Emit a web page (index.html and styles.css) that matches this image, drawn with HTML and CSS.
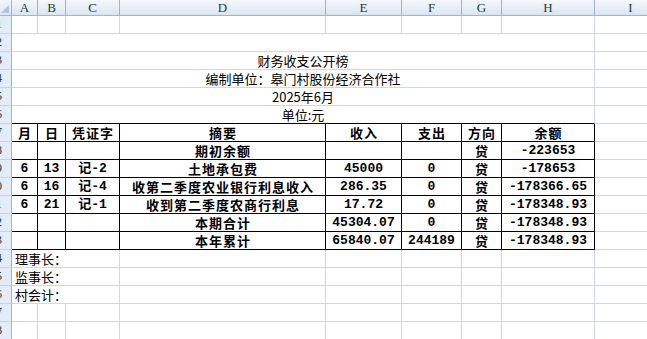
FILE: index.html
```html
<!DOCTYPE html>
<html lang="zh">
<head>
<meta charset="utf-8">
<title>财务收支公开榜</title>
<link rel="stylesheet" href="styles.css">
</head>
<body>
<div class="sheet">
  <div class="corner"><svg width="11" height="15" viewBox="0 0 11 15"><polygon points="1,13 9,5 9,13" fill="#b3c4da"/></svg></div>
  <div class="ch">A</div><div class="ch">B</div><div class="ch">C</div><div class="ch">D</div><div class="ch">E</div><div class="ch">F</div><div class="ch">G</div><div class="ch">H</div><div class="ch">I</div>

  <div class="rh"><span>1</span></div>
  <div class="cell"></div><div class="cell"></div><div class="cell"></div><div class="cell"></div><div class="cell"></div><div class="cell"></div><div class="cell"></div><div class="cell"></div><div class="cell"></div>

  <div class="rh"><span>2</span></div>
  <div class="cell m8"></div><div class="cell"></div>

  <div class="rh"><span>3</span></div>
  <div class="cell m8">财务收支公开榜</div><div class="cell"></div>

  <div class="rh"><span>4</span></div>
  <div class="cell m8">编制单位：皋门村股份经济合作社</div><div class="cell"></div>

  <div class="rh"><span>5</span></div>
  <div class="cell m8">2025年6月</div><div class="cell"></div>

  <div class="rh"><span>6</span></div>
  <div class="cell m8 topline">单位:元</div><div class="cell"></div>

  <div class="rh"><span>7</span></div>
  <div class="cell b cjk">月</div><div class="cell b cjk">日</div><div class="cell b cjk">凭证字</div><div class="cell b cjk">摘要</div><div class="cell b cjk">收入</div><div class="cell b cjk">支出</div><div class="cell b cjk">方向</div><div class="cell b cjk">余额</div><div class="cell"></div>

  <div class="rh"><span>8</span></div>
  <div class="cell b"></div><div class="cell b"></div><div class="cell b"></div><div class="cell b cjk">期初余额</div><div class="cell b"></div><div class="cell b"></div><div class="cell b cjk">贷</div><div class="cell b num">-223653</div><div class="cell"></div>

  <div class="rh"><span>9</span></div>
  <div class="cell b num">6</div><div class="cell b num">13</div><div class="cell b num">记-2</div><div class="cell b cjk">土地承包费</div><div class="cell b num">45000</div><div class="cell b num">0</div><div class="cell b cjk">贷</div><div class="cell b num">-178653</div><div class="cell"></div>

  <div class="rh"><span>10</span></div>
  <div class="cell b num">6</div><div class="cell b num">16</div><div class="cell b num">记-4</div><div class="cell b cjk">收第二季度农业银行利息收入</div><div class="cell b num">286.35</div><div class="cell b num">0</div><div class="cell b cjk">贷</div><div class="cell b num">-178366.65</div><div class="cell"></div>

  <div class="rh"><span>11</span></div>
  <div class="cell b num">6</div><div class="cell b num">21</div><div class="cell b num">记-1</div><div class="cell b cjk">收到第二季度农商行利息</div><div class="cell b num">17.72</div><div class="cell b num">0</div><div class="cell b cjk">贷</div><div class="cell b num">-178348.93</div><div class="cell"></div>

  <div class="rh"><span>12</span></div>
  <div class="cell b"></div><div class="cell b"></div><div class="cell b"></div><div class="cell b cjk">本期合计</div><div class="cell b num">45304.07</div><div class="cell b num">0</div><div class="cell b cjk">贷</div><div class="cell b num">-178348.93</div><div class="cell"></div>

  <div class="rh"><span>13</span></div>
  <div class="cell b"></div><div class="cell b"></div><div class="cell b"></div><div class="cell b cjk">本年累计</div><div class="cell b num">65840.07</div><div class="cell b num">244189</div><div class="cell b cjk">贷</div><div class="cell b num">-178348.93</div><div class="cell"></div>

  <div class="rh"><span>14</span></div>
  <div class="cell m3 left">理事长：</div><div class="cell"></div><div class="cell"></div><div class="cell"></div><div class="cell"></div><div class="cell"></div><div class="cell"></div>

  <div class="rh"><span>15</span></div>
  <div class="cell m3 left">监事长：</div><div class="cell"></div><div class="cell"></div><div class="cell"></div><div class="cell"></div><div class="cell"></div><div class="cell"></div>

  <div class="rh"><span>16</span></div>
  <div class="cell m3 left">村会计：</div><div class="cell"></div><div class="cell"></div><div class="cell"></div><div class="cell"></div><div class="cell"></div><div class="cell"></div>

  <div class="rh"><span>17</span></div>
  <div class="cell"></div><div class="cell"></div><div class="cell"></div><div class="cell"></div><div class="cell"></div><div class="cell"></div><div class="cell"></div><div class="cell"></div><div class="cell"></div>

  <div class="rh"><span>18</span></div>
  <div class="cell"></div><div class="cell"></div><div class="cell"></div><div class="cell"></div><div class="cell"></div><div class="cell"></div><div class="cell"></div><div class="cell"></div><div class="cell"></div>
</div>
</body>
</html>
```
FILE: styles.css
```css
html, body {
  margin: 0;
  padding: 0;
  background: #ffffff;
  overflow: hidden;
}

.sheet {
  display: grid;
  grid-template-columns: 12px 26px 28px 54px 206px 76px 60px 40px 93px 72px;
  grid-template-rows: 16px repeat(18, 18px);
  width: 667px;
  font-family: "Noto Sans CJK SC", sans-serif;
  font-size: 13px;
  color: #000000;
}

.sheet > div {
  box-sizing: border-box;
}

.corner {
  background: linear-gradient(#f3f6fb, #dde6f2);
  border-right: 1px solid #9eb6ce;
  border-bottom: 1px solid #9eb6ce;
  overflow: hidden;
}

.corner svg {
  display: block;
}

.ch {
  background: linear-gradient(#f5f8fc, #dbe5f1);
  border-right: 1px solid #9eb6ce;
  border-bottom: 1px solid #9eb6ce;
  display: flex;
  align-items: center;
  justify-content: center;
  font-family: "Liberation Serif", serif;
  font-size: 13px;
  line-height: 15px;
  color: #1f3b3a;
}

.rh {
  background: #e4ecf7;
  border-right: 1px solid #9eb6ce;
  border-bottom: 1px solid #c5d2e3;
  display: flex;
  align-items: center;
  justify-content: flex-end;
  padding-right: 9px;
  overflow: hidden;
  font-family: "Liberation Serif", serif;
  font-size: 12px;
  color: #1f3b3a;
}

.rh span {
  flex: none;
}

.cell {
  border-right: 1px solid #d0d7e5;
  border-bottom: 1px solid #d0d7e5;
  display: flex;
  align-items: center;
  justify-content: center;
  white-space: nowrap;
  overflow: hidden;
  line-height: 17px;
}

.m8 {
  grid-column: span 8;
}

.m3 {
  grid-column: span 3;
}

.left {
  justify-content: flex-start;
  padding-left: 3px;
}

.topline {
  border-bottom-color: #000000;
}

.b {
  border-right-color: #000000;
  border-bottom-color: #000000;
  font-weight: bold;
}

.cjk {
  letter-spacing: 1px;
  padding-left: 1px;
}

.num {
  font-family: "Liberation Mono", "Noto Sans CJK SC", monospace;
  font-size: 13px;
}
```
